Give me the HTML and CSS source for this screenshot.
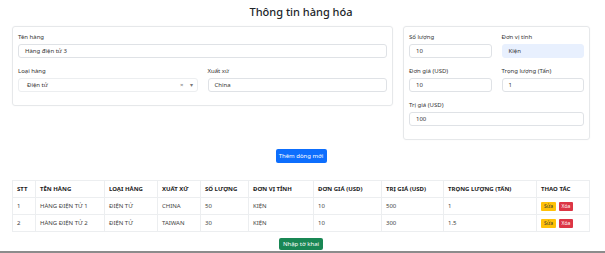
FILE: index.html
```html
<!DOCTYPE html>
<html lang="vi">
<head>
<meta charset="utf-8">
<title>Thông tin hàng hóa</title>
<link rel="stylesheet" href="styles.css">
</head>
<body>
<div class="page">
  <h1 class="title">Thông tin hàng hóa</h1>
  <div class="forms">
    <div class="card">
      <div class="field">
        <label class="label">Tên hàng</label>
        <div class="input">Hàng điện tử 3</div>
      </div>
      <div class="grid2">
        <div class="field">
          <label class="label">Loại hàng</label>
          <div class="select">
            <span class="select-value">Điện tử</span>
            <span class="select-ind"><span class="clear">×</span><span class="arrow">▾</span></span>
          </div>
        </div>
        <div class="field">
          <label class="label">Xuất xứ</label>
          <div class="input">China</div>
        </div>
      </div>
    </div>
    <div class="card">
      <div class="grid2">
        <div class="field">
          <label class="label">Số lượng</label>
          <div class="input">10</div>
        </div>
        <div class="field">
          <label class="label">Đơn vị tính</label>
          <div class="input filled">Kiện</div>
        </div>
        <div class="field">
          <label class="label">Đơn giá (USD)</label>
          <div class="input">10</div>
        </div>
        <div class="field">
          <label class="label">Trọng lượng (Tấn)</label>
          <div class="input">1</div>
        </div>
      </div>
      <div class="field">
        <label class="label">Trị giá (USD)</label>
        <div class="input">100</div>
      </div>
    </div>
  </div>
  <div class="actions">
    <button class="btn btn-primary">Thêm dòng mới</button>
  </div>
  <table class="table">
    <colgroup>
      <col class="c1"><col class="c2"><col class="c3"><col class="c4"><col class="c5"><col class="c6"><col class="c7"><col class="c8"><col class="c9"><col class="c10">
    </colgroup>
    <thead>
      <tr><th>STT</th><th>TÊN HÀNG</th><th>LOẠI HÀNG</th><th>XUẤT XỨ</th><th>SỐ LƯỢNG</th><th>ĐƠN VỊ TÍNH</th><th>ĐƠN GIÁ (USD)</th><th>TRỊ GIÁ (USD)</th><th>TRỌNG LƯỢNG (TẤN)</th><th>THAO TÁC</th></tr>
    </thead>
    <tbody>
      <tr><td>1</td><td>HÀNG ĐIỆN TỬ 1</td><td>ĐIỆN TỬ</td><td>CHINA</td><td>50</td><td>KIỆN</td><td>10</td><td>500</td><td>1</td><td><span class="mini mini-warn">Sửa</span><span class="mini mini-danger">Xóa</span></td></tr>
      <tr><td>2</td><td>HÀNG ĐIỆN TỬ 2</td><td>ĐIỆN TỬ</td><td>TAIWAN</td><td>30</td><td>KIỆN</td><td>10</td><td>300</td><td>1.5</td><td><span class="mini mini-warn">Sửa</span><span class="mini mini-danger">Xóa</span></td></tr>
    </tbody>
  </table>
  <div class="actions actions-bottom">
    <button class="btn btn-success">Nhập tờ khai</button>
  </div>
</div>
</body>
</html>
```

FILE: styles.css
```css
* { box-sizing: border-box; }
html, body { margin: 0; padding: 0; height: 100%; }
body {
  font-family: "Noto Sans", "Open Sans", sans-serif;
  color: #212529;
  background: #fff;
  border-bottom: 2px solid #8c8c8c;
}
.page {
  width: 578px;
  margin-left: 12px;
  padding-top: 5px;
}
.title {
  margin: 0 0 7px;
  font-size: 11px;
  line-height: 14px;
  font-weight: 500;
  text-align: center;
}
.forms {
  display: grid;
  grid-template-columns: 381px 187px;
  gap: 10px;
  align-items: start;
}
.card {
  border: 1px solid #e6e8ea;
  border-radius: 3px;
  padding: 6px 5px 4px;
  box-shadow: 0 0 2px rgba(0,0,0,0.04);
}
.grid2 {
  display: grid;
  grid-template-columns: 1fr 1fr;
  column-gap: 10px;
}
.field { margin-bottom: 9px; }
.label {
  display: block;
  font-size: 6px;
  line-height: 8px;
  margin-bottom: 3px;
  color: #333;
}
.input, .select {
  height: 14px;
  border: 1px solid #dfe2e6;
  border-radius: 3px;
  font-size: 6px;
  line-height: 12px;
  padding: 0 6px;
  color: #333;
}
.input.filled { background: #e8f0fe; border-color: #e8f0fe; }
.select {
  display: flex;
  justify-content: space-between;
  align-items: center;
  padding: 0 4px 0 8px;
  border-color: #eceef0;
}
.select-ind { display: flex; gap: 6px; color: #777; font-size: 6px; }
.actions {
  display: flex;
  justify-content: center;
  margin-top: 9px;
  margin-bottom: 17px;
}
.actions-bottom { margin-top: 6px; margin-bottom: 0; }
.btn {
  border: 0;
  border-radius: 2px;
  font-family: inherit;
  font-size: 6px;
  color: #fff;
  cursor: pointer;
}
.btn-primary { background: #0d6efd; width: 51px; height: 14px; padding: 0; }
.btn-success { background: #198754; width: 44px; height: 12px; padding: 0; }
.table {
  width: 578px;
  border-collapse: collapse;
  table-layout: fixed;
  font-size: 6px;
}
.c1 { width: 23px; }
.c2 { width: 69px; }
.c3 { width: 53px; }
.c4 { width: 43px; }
.c5 { width: 48px; }
.c6 { width: 65px; }
.c7 { width: 68px; }
.c8 { width: 62px; }
.c9 { width: 93px; }
.c10 { width: 53px; }
.table th, .table td {
  border: 1px solid #eceef0;
  padding: 0 4px;
  text-align: left;
  white-space: nowrap;
  overflow: hidden;
}
.table th { height: 17px; font-weight: 700; color: #222; }
.table td { height: 17px; color: #444; }
.mini {
  display: inline-block;
  width: 15px;
  height: 9px;
  line-height: 9px;
  text-align: center;
  font-size: 5px;
  border-radius: 1px;
  margin-right: 3px;
  vertical-align: middle;
}
.mini-warn { background: #ffc107; color: #333; }
.mini-danger { background: #dc3545; color: #fff; width: 14px; }
```
